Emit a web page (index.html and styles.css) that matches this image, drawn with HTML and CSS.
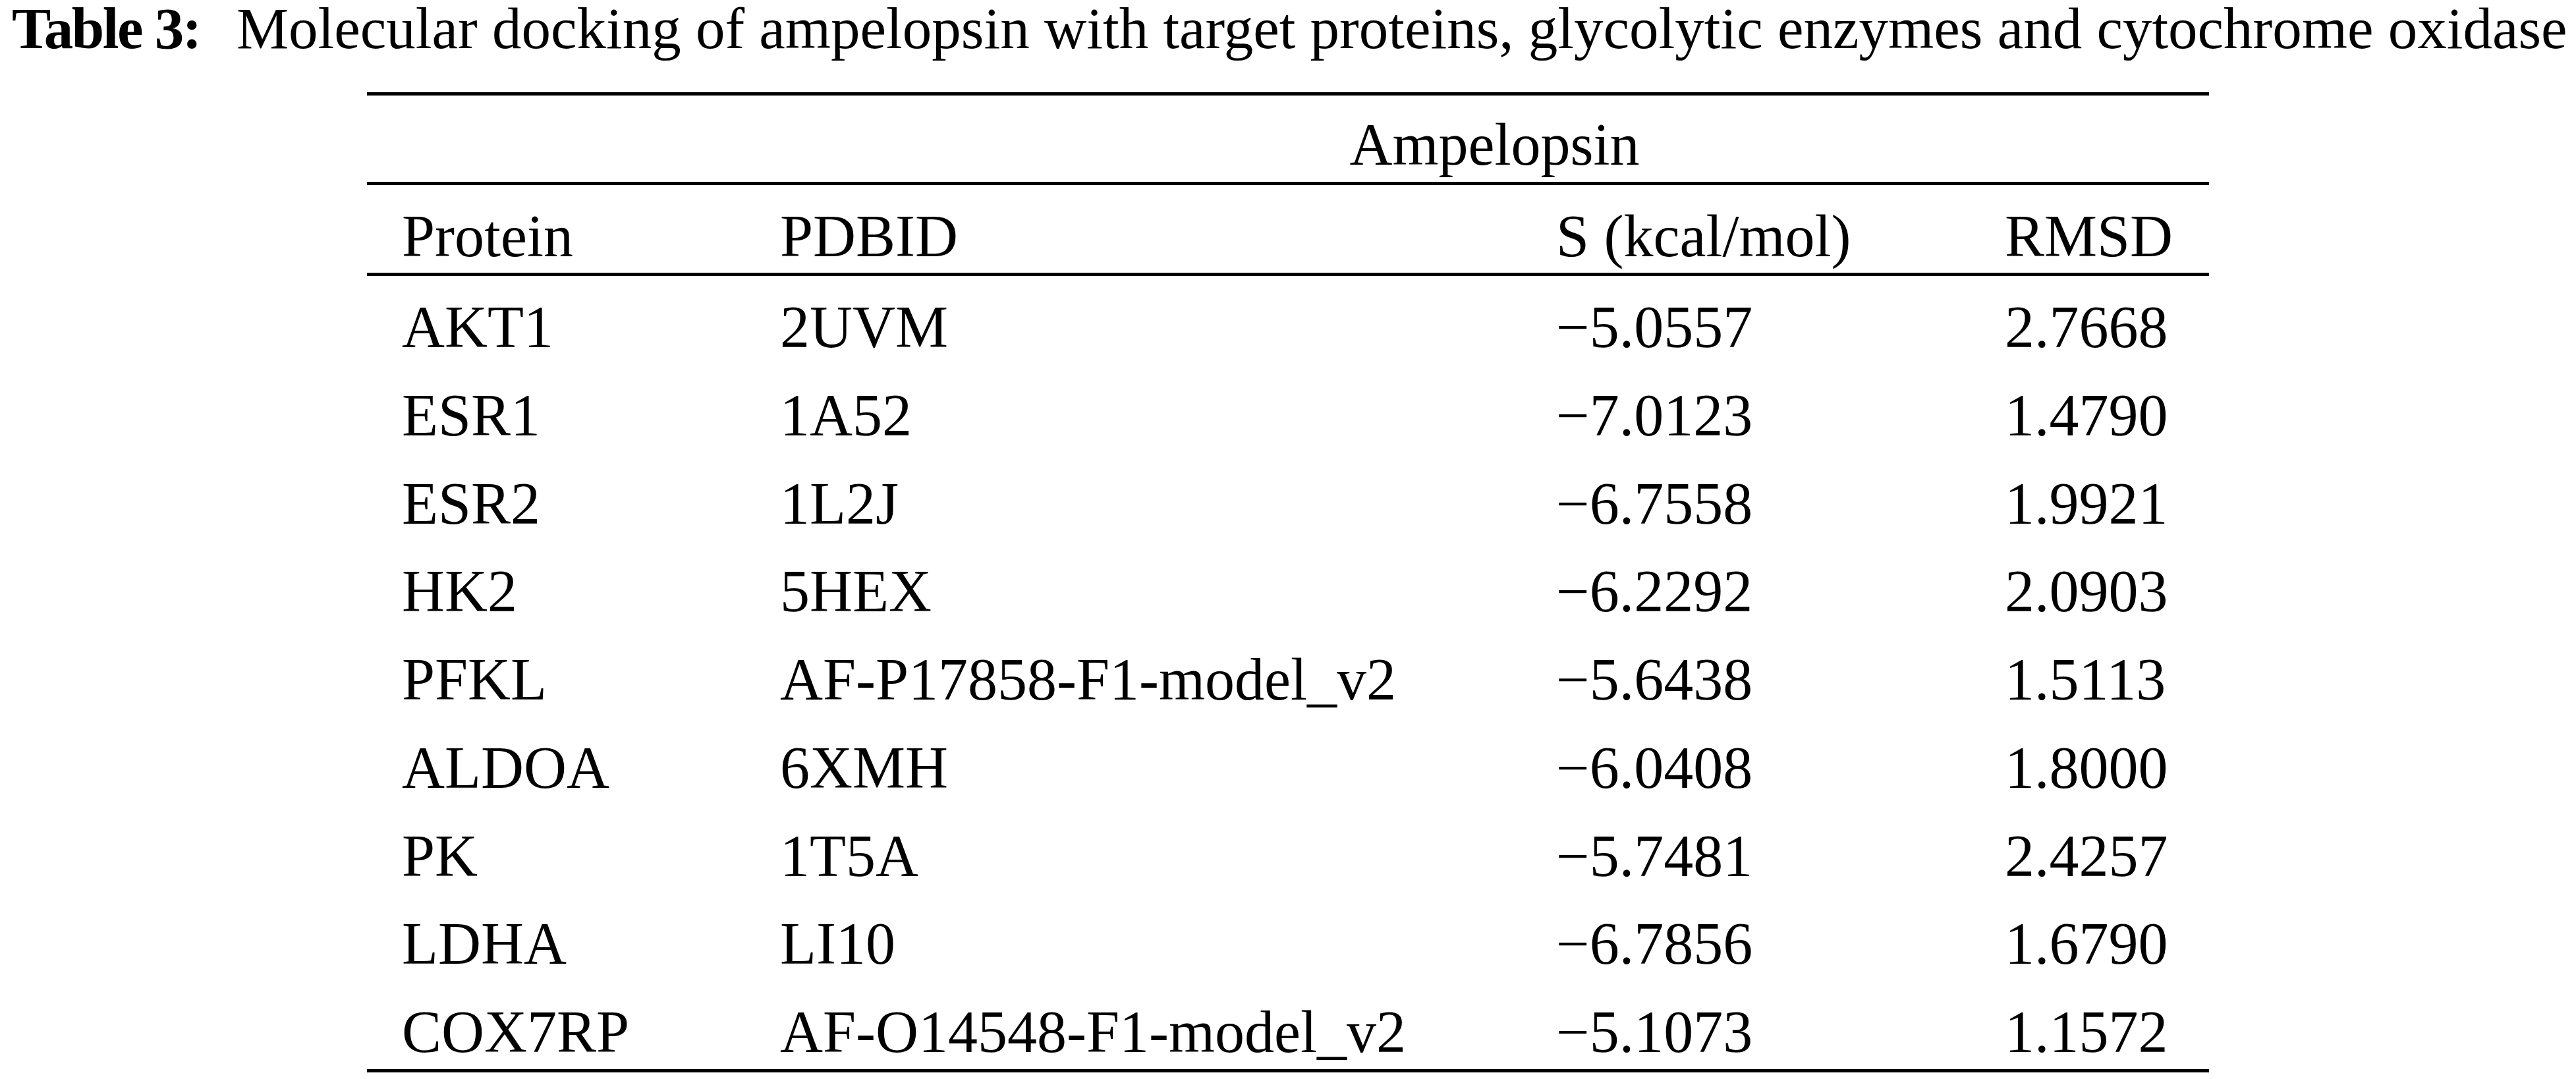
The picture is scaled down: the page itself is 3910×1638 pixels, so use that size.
FILE: index.html
```html
<!DOCTYPE html>
<html>
    <head>
        <title>Table 3: Molecular docking of ampelopsin</title>
        <link rel="stylesheet" href="styles.css">
    </head>
    <body>
        <div class="caption"><b class="caption-label">Table 3:</b> Molecular docking of ampelopsin with target proteins, glycolytic enzymes and cytochrome oxidase</div>

        <table class="docking">
            <colgroup>
                <col class="col-protein">
                <col class="col-pdb">
                <col class="col-score">
                <col class="col-rmsd">
            </colgroup>
            <thead>
                <tr class="group-row">
                    <th></th>
                    <th colspan="3" class="group-title">Ampelopsin</th>
                </tr>
                <tr class="head-row">
                    <th>Protein</th>
                    <th>PDBID</th>
                    <th>S (kcal/mol)</th>
                    <th>RMSD</th>
                </tr>
            </thead>
            <tbody>
                <tr><td>AKT1</td><td>2UVM</td><td>&minus;5.0557</td><td>2.7668</td></tr>
                <tr><td>ESR1</td><td>1A52</td><td>&minus;7.0123</td><td>1.4790</td></tr>
                <tr><td>ESR2</td><td>1L2J</td><td>&minus;6.7558</td><td>1.9921</td></tr>
                <tr><td>HK2</td><td>5HEX</td><td>&minus;6.2292</td><td>2.0903</td></tr>
                <tr><td>PFKL</td><td>AF-P17858-F1-model_v2</td><td>&minus;5.6438</td><td>1.5113</td></tr>
                <tr><td>ALDOA</td><td>6XMH</td><td>&minus;6.0408</td><td>1.8000</td></tr>
                <tr><td>PK</td><td>1T5A</td><td>&minus;5.7481</td><td>2.4257</td></tr>
                <tr><td>LDHA</td><td>LI10</td><td>&minus;6.7856</td><td>1.6790</td></tr>
                <tr><td>COX7RP</td><td>AF-O14548-F1-model_v2</td><td>&minus;5.1073</td><td>1.1572</td></tr>
            </tbody>
        </table>
    </body>
</html>
```

FILE: styles.css
```css
:root {
    --ink: #000;
    --rule: 5px;
    --cell: 100px;
}
html, body {
    margin: 0;
    padding: 0;
    background: #fff;
    color: var(--ink);
    font-family: "Liberation Serif", "Times New Roman", serif;
}
.caption {
    font-size: 89px;
    line-height: 86px;
    padding-left: 18px;
    margin-bottom: 54px;
    white-space: nowrap;
}
.caption-label {
    letter-spacing: -2.5px;
    margin-right: 0.37em;
}
.docking {
    margin-left: 557px;
    width: 2796px;
    table-layout: fixed;
    border-collapse: separate;
    border-spacing: 0;
    border-top: var(--rule) solid var(--ink);
    border-bottom: var(--rule) solid var(--ink);
    font-size: 90px;
}
.col-protein { width: 627px; }
.col-pdb { width: 1178px; }
.col-score { width: 681px; }
.col-rmsd { width: 310px; }

.docking th, .docking td {
    font-weight: normal;
    text-align: left;
    white-space: nowrap;
    line-height: var(--cell);
    padding: 28px 0 5.75px 0;
    vertical-align: baseline;
}
.docking th:first-child, .docking td:first-child {
    padding-left: 53px;
}
.group-row th {
    padding-top: 25px;
    padding-bottom: 6px;
    border-bottom: var(--rule) solid var(--ink);
}
.group-row th.group-title {
    text-align: center;
    padding-left: 0;
}
.head-row th {
    padding-bottom: 5px;
    border-bottom: var(--rule) solid var(--ink);
}
```
